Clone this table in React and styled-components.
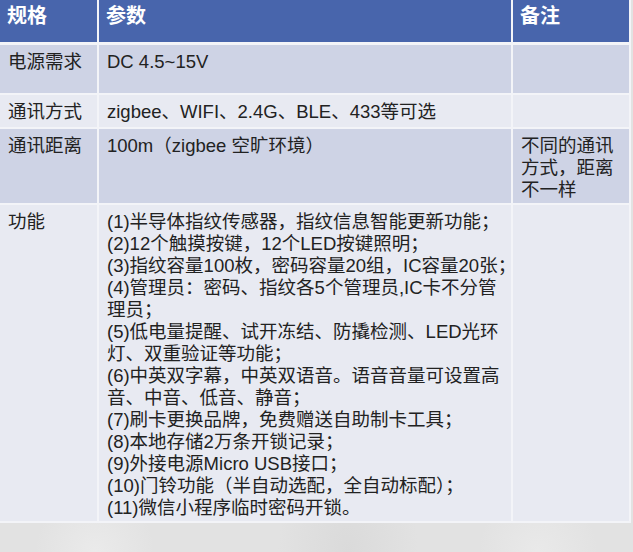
import React from "react";
import styled, { createGlobalStyle } from "styled-components";

const Global = createGlobalStyle`
  html, body {
    margin: 0;
    padding: 0;
  }
  body {
    width: 633px;
    height: 552px;
    overflow: hidden;
    background-color: #e2e2e2;
    background-image:
      radial-gradient(ellipse at 15% 100%, rgba(240,240,240,0.6) 0, rgba(240,240,240,0) 60px),
      radial-gradient(ellipse at 55% 100%, rgba(210,210,210,0.5) 0, rgba(210,210,210,0) 70px),
      radial-gradient(ellipse at 85% 100%, rgba(238,238,238,0.6) 0, rgba(238,238,238,0) 60px);
    font-family: "Liberation Sans", "Noto Sans CJK SC", sans-serif;
  }
`;

const Table = styled.div`
  display: flex;
  flex-direction: column;
  gap: 2px;
  width: 629px;
  padding: 0 2px 2px 0;
  background: #f3f4f8;
`;

const Row = styled.div`
  display: grid;
  grid-template-columns: 97px 412px 116px;
  column-gap: 2px;
  height: ${(p) => p.$h}px;
  margin-bottom: ${(p) => (p.$head ? 1 : 0)}px;
`;

const Cell = styled.div`
  box-sizing: border-box;
  padding: ${(p) => (p.$head ? "5px 8px 0 7px" : "6px 0 0 8px")};
  background: ${(p) =>
    p.$head ? "#4865ac" : p.$dark ? "#ced3e5" : "#e8eaf2"};
  color: ${(p) => (p.$head ? "#ffffff" : "#222222")};
  font-size: ${(p) => (p.$head ? "20px" : "18.5px")};
  font-weight: ${(p) => (p.$head ? 700 : 400)};
  line-height: 22px;
`;

const Line = styled.span`
  display: block;
  white-space: nowrap;
`;

const features = [
  "(1)半导体指纹传感器，指纹信息智能更新功能；",
  "(2)12个触摸按键，12个LED按键照明；",
  "(3)指纹容量100枚，密码容量20组，IC容量20张；",
  "(4)管理员：密码、指纹各5个管理员,IC卡不分管",
  "理员；",
  "(5)低电量提醒、试开冻结、防撬检测、LED光环",
  "灯、双重验证等功能；",
  "(6)中英双字幕，中英双语音。语音音量可设置高",
  "音、中音、低音、静音；",
  "(7)刷卡更换品牌，免费赠送自助制卡工具；",
  "(8)本地存储2万条开锁记录；",
  "(9)外接电源Micro USB接口；",
  "(10)门铃功能（半自动选配，全自动标配）；",
  "(11)微信小程序临时密码开锁。",
];

export default function App() {
  return (
    <>
      <Global />
      <Table>
        <Row $h={42} $head>
          <Cell $head>规格</Cell>
          <Cell $head>参数</Cell>
          <Cell $head>备注</Cell>
        </Row>
        <Row $h={48}>
          <Cell $dark>电源需求</Cell>
          <Cell $dark>DC 4.5~15V</Cell>
          <Cell $dark />
        </Row>
        <Row $h={32}>
          <Cell>通讯方式</Cell>
          <Cell>zigbee、WIFI、2.4G、BLE、433等可选</Cell>
          <Cell />
        </Row>
        <Row $h={74}>
          <Cell $dark>通讯距离</Cell>
          <Cell $dark>100m（zigbee 空旷环境）</Cell>
          <Cell $dark>
            <Line>不同的通讯</Line>
            <Line>方式，距离</Line>
            <Line>不一样</Line>
          </Cell>
        </Row>
        <Row $h={316}>
          <Cell>功能</Cell>
          <Cell>
            {features.map((t, i) => (
              <Line key={i}>{t}</Line>
            ))}
          </Cell>
          <Cell />
        </Row>
      </Table>
    </>
  );
}
